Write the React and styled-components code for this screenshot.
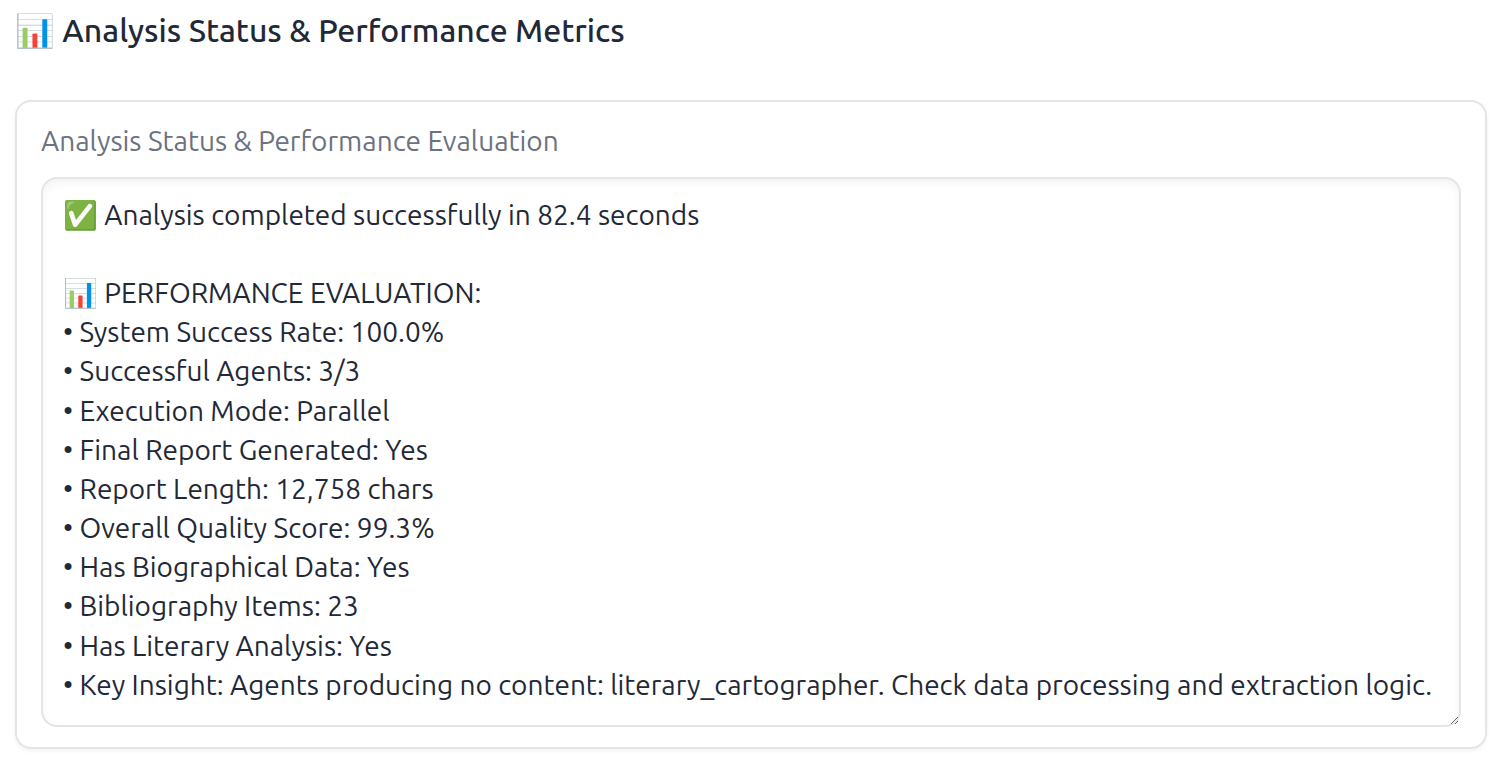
import React, { useState } from 'react'
import styled, { createGlobalStyle } from 'styled-components'

const GlobalStyle = createGlobalStyle`
  body {
    margin: 0;
    background: #fff;
    color: #1f2937;
    font-family: Ubuntu, 'Noto Sans', 'Noto Color Emoji', sans-serif;
  }
`

const Page = styled.main`
  padding: 10px 14px 12px 15px;
`

const Title = styled.h3`
  margin: 0 0 48px;
  font-size: 32px;
  font-weight: 500;
  line-height: 1.3;
`

const Block = styled.section`
  padding: 20px 24px;
  border: 2px solid #e4e4e9;
  border-radius: 16px;
  box-shadow: 0 2px 4px rgba(0, 0, 0, 0.05);
`

const Label = styled.label`
  display: block;
  margin-bottom: 18px;
  color: #6b7280;
  font-size: 28px;
  line-height: 37px;
`

const Output = styled.textarea`
  display: block;
  box-sizing: border-box;
  width: 100%;
  padding: 16px 20px 21px;
  border: 2px solid #e4e4e9;
  border-radius: 16px;
  background: #fff;
  box-shadow: inset 0 4px 8px rgba(0, 0, 0, 0.05);
  color: inherit;
  font-family: inherit;
  font-size: 28px;
  line-height: 1.4;
  outline: none;
  overflow: hidden;
  resize: vertical;
`

const report = `✅ Analysis completed successfully in 82.4 seconds

📊 PERFORMANCE EVALUATION:
• System Success Rate: 100.0%
• Successful Agents: 3/3
• Execution Mode: Parallel
• Final Report Generated: Yes
• Report Length: 12,758 chars
• Overall Quality Score: 99.3%
• Has Biographical Data: Yes
• Bibliography Items: 23
• Has Literary Analysis: Yes
• Key Insight: Agents producing no content: literary_cartographer. Check data processing and extraction logic.`

export default function App() {
  const [value, setValue] = useState(report)

  return (
    <Page>
      <GlobalStyle />
      <Title>📊 Analysis Status &amp; Performance Metrics</Title>
      <Block>
        <Label htmlFor="status">Analysis Status &amp; Performance Evaluation</Label>
        <Output
          id="status"
          rows={13}
          spellCheck={false}
          value={value}
          onChange={(e) => setValue(e.target.value)}
        />
      </Block>
    </Page>
  )
}
